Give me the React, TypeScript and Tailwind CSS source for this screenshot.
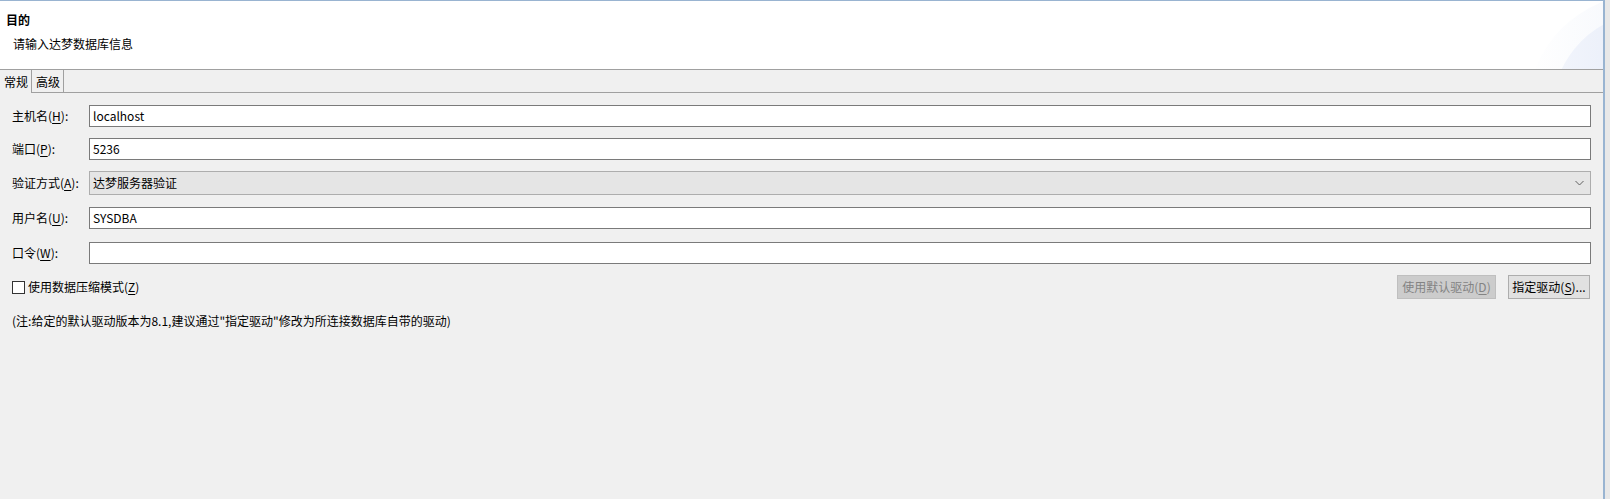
import React from "react";

function Field({ label, mn, rest, value, tall = false, mt }: { label: string; mn: string; rest: string; value?: string; tall?: boolean; mt: string }) {
  return (
    <div className={`flex items-center ${mt}`}>
      <div className="w-[77px] shrink-0 whitespace-nowrap">
        {label}(<u className="underline-offset-2">{mn}</u>){rest}
      </div>
      <div className="flex-1 h-[22px] border border-[#7a7a7a] bg-white px-[3px] flex items-center whitespace-nowrap">
        {value}
      </div>
    </div>
  );
}

export default function App() {
  return (
    <div className="w-[1610px] h-[499px] flex overflow-hidden bg-[#f0f0f0] text-[12px] leading-[16px] text-black font-['Noto_Sans_CJK_SC','Noto_Sans',sans-serif]">
      <div className="w-[1603px] shrink-0 flex flex-col">
        <header className="relative h-[69px] shrink-0 bg-white border-t border-[#99b4d1] overflow-hidden">
          <svg className="absolute right-0 top-0" width="90" height="68" viewBox="1513 1 90 68">
            <defs>
              <linearGradient id="g1" x1="0" y1="0" x2="1" y2="0">
                <stop offset="0" stopColor="#ffffff" />
                <stop offset="1" stopColor="#eaeff9" />
              </linearGradient>
              <linearGradient id="g2" x1="0" y1="0" x2="1" y2="0">
                <stop offset="0" stopColor="#f2f5fc" />
                <stop offset="1" stopColor="#dde4f5" />
              </linearGradient>
            </defs>
            <circle cx="1645" cy="112" r="118" fill="url(#g1)" />
            <circle cx="1652" cy="112" r="100" fill="url(#g2)" />
          </svg>
          <div className="relative pt-[11px] pl-[6px] font-bold">目的</div>
          <div className="relative mt-[8px] pl-[13px]">请输入达梦数据库信息</div>
        </header>
        <div className="h-px shrink-0 bg-[#a0a0a0]" />
        <div className="h-[23px] shrink-0 flex">
          <div className="w-[32px] border-r border-[#a0a0a0] pl-[4px] pt-[4px] bg-[#f0f0f0]">常规</div>
          <div className="w-[32px] border-r border-b border-[#a0a0a0] pl-[4px] pt-[4px]">高级</div>
          <div className="flex-1 border-b border-[#a0a0a0]" />
        </div>
        <div className="flex-1 flex flex-col pt-[12px] pl-[12px] pr-[12px]">
          <Field label="主机名" mn="H" rest=":" value="localhost" mt="" />
          <Field label="端口" mn="P" rest=":" value="5236" mt="mt-[11px]" />
          <div className="flex items-center mt-[11px]">
            <div className="w-[77px] shrink-0 whitespace-nowrap">
              验证方式(<u className="underline-offset-2">A</u>):
            </div>
            <div className="flex-1 h-[24px] border border-[#adadad] bg-[#e5e5e5] pl-[3px] pr-[6px] flex items-center justify-between">
              <span>达梦服务器验证</span>
              <svg width="9" height="6" viewBox="0 0 9 6">
                <polyline points="0.5,1 4.5,5 8.5,1" fill="none" stroke="#606060" strokeWidth="1" />
              </svg>
            </div>
          </div>
          <Field label="用户名" mn="U" rest=":" value="SYSDBA" mt="mt-[12px]" />
          <Field label="口令" mn="W" rest=":" value="" mt="mt-[13px]" />
          <div className="flex items-center mt-[11px] h-[24px]">
            <div className="w-[13px] h-[13px] border border-[#333333] bg-white" />
            <div className="ml-[3px] whitespace-nowrap">
              使用数据压缩模式(<u className="underline-offset-2">Z</u>)
            </div>
            <div className="flex-1" />
            <div className="w-[99px] h-[24px] border border-[#bfbfbf] bg-[#cccccc] text-[#838383] flex items-center justify-center whitespace-nowrap">
              使用默认驱动(<u className="underline-offset-2">D</u>)
            </div>
            <div className="ml-[12px] mr-px w-[82px] h-[24px] border border-[#adadad] bg-[#e1e1e1] flex items-center justify-center whitespace-nowrap">
              指定驱动(<u className="underline-offset-2">S</u>)...
            </div>
          </div>
          <div className="mt-[14px] whitespace-nowrap">
            (注:给定的默认驱动版本为8.1,建议通过"指定驱动"修改为所连接数据库自带的驱动)
          </div>
        </div>
      </div>
      <div className="w-[2px] shrink-0 bg-[#99b4d1]" />
      <div className="flex-1 bg-[#e8e8e8]" />
    </div>
  );
}
